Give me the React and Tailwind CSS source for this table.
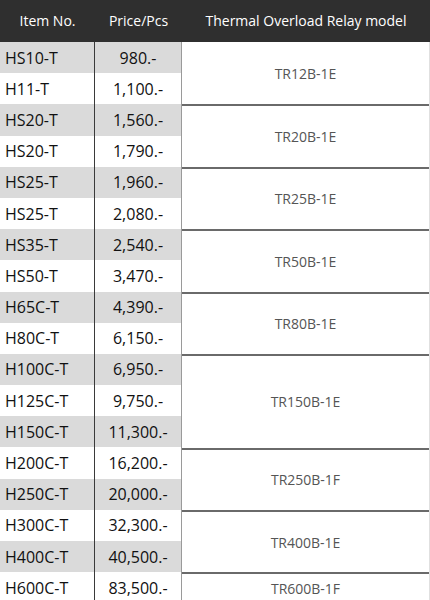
const ROWS = [
  ['HS10-T', '980.-'],
  ['H11-T', '1,100.-'],
  ['HS20-T', '1,560.-'],
  ['HS20-T', '1,790.-'],
  ['HS25-T', '1,960.-'],
  ['HS25-T', '2,080.-'],
  ['HS35-T', '2,540.-'],
  ['HS50-T', '3,470.-'],
  ['H65C-T', '4,390.-'],
  ['H80C-T', '6,150.-'],
  ['H100C-T', '6,950.-'],
  ['H125C-T', '9,750.-'],
  ['H150C-T', '11,300.-'],
  ['H200C-T', '16,200.-'],
  ['H250C-T', '20,000.-'],
  ['H300C-T', '32,300.-'],
  ['H400C-T', '40,500.-'],
  ['H600C-T', '83,500.-'],
];

// relay model spans a number of rows
const GROUPS = [
  ['TR12B-1E', 2],
  ['TR20B-1E', 2],
  ['TR25B-1E', 2],
  ['TR50B-1E', 2],
  ['TR80B-1E', 2],
  ['TR150B-1E', 3],
  ['TR250B-1F', 2],
  ['TR400B-1E', 2],
  ['TR600B-1F', 1],
];

const ROW_H = 31.2;

export default function App() {
  return (
    <div className="w-[430px] h-[600px] overflow-hidden bg-white" style={{ fontFamily: '"Open Sans", "Noto Sans", sans-serif' }}>
      <div className="flex h-[42px] bg-[#2f2f2f] text-white text-[14px] pb-[2px]">
        <div className="w-[95px] flex items-center justify-center">Item No.</div>
        <div className="w-[87px] flex items-center justify-center">Price/Pcs</div>
        <div className="flex-1 flex items-center justify-center">Thermal Overload Relay model</div>
      </div>
      <div className="flex">
        <div className="w-[95px] border-r border-[#3a3a3a]">
          {ROWS.map(([item], i) => (
            <div
              key={i}
              className={`h-[31.2px] flex items-center pl-[5px] text-[16px] text-[#111] ${i % 2 === 0 ? 'bg-[#dadada]' : 'bg-white'}`}
            >
              {item}
            </div>
          ))}
        </div>
        <div className="w-[87px] border-r border-[#9a9a9a]">
          {ROWS.map(([, price], i) => (
            <div
              key={i}
              className={`h-[31.2px] flex items-center justify-center text-[16px] text-[#111] ${i % 2 === 0 ? 'bg-[#dadada]' : 'bg-white'}`}
            >
              {price}
            </div>
          ))}
        </div>
        <div className="flex-1 border-r border-[#e0e0e0]">
          {GROUPS.map(([model, n], i) => (
            <div
              key={i}
              className={`flex items-center justify-center text-[14px] text-[#555] ${i > 0 ? 'border-t-2 border-[#6a6a6a]' : ''}`}
              style={{ height: n * ROW_H }}
            >
              {model}
            </div>
          ))}
        </div>
      </div>
    </div>
  );
}
